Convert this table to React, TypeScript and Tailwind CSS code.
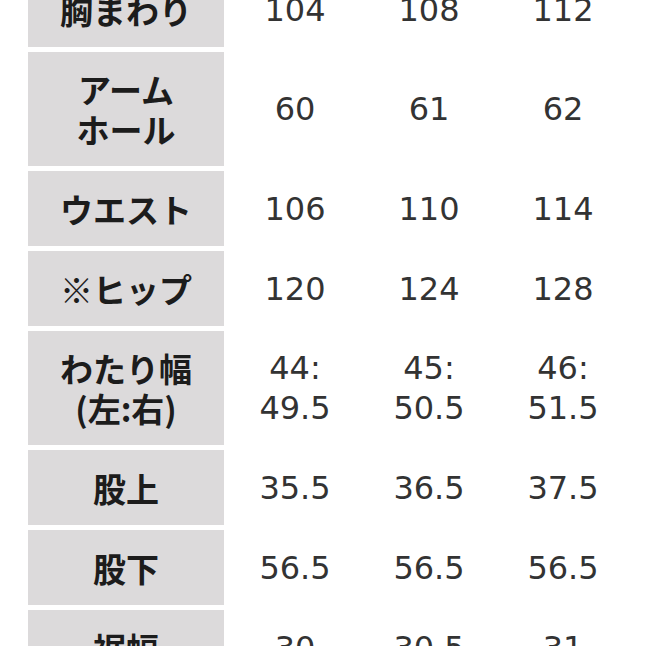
import React from "react";

type Row = { label: React.ReactNode; vals: React.ReactNode[]; tall?: boolean };

const rows: Row[] = [
  { label: "胸まわり", vals: ["104", "108", "112"] },
  { label: <>アーム<br />ホール</>, vals: ["60", "61", "62"], tall: true },
  { label: "ウエスト", vals: ["106", "110", "114"] },
  { label: "※ヒップ", vals: ["120", "124", "128"] },
  {
    label: <>わたり幅<br />(左:右)</>,
    vals: [<>44:<br />49.5</>, <>45:<br />50.5</>, <>46:<br />51.5</>],
    tall: true,
  },
  { label: "股上", vals: ["35.5", "36.5", "37.5"] },
  { label: "股下", vals: ["56.5", "56.5", "56.5"] },
  { label: "裾幅", vals: ["30", "30.5", "31"] },
];

export default function App() {
  return (
    <div className="w-[646px] h-[646px] overflow-hidden bg-white">
      <div className="flex flex-col gap-[5px] -mt-[28px] pl-[28px]">
        {rows.map((r, i) => (
          <div key={i} className={`flex ${r.tall ? "h-[114px]" : "h-[75px]"}`}>
            <div
              className="w-[196px] bg-[#dcdadb] flex items-center justify-center text-center text-[33px] font-bold leading-[40px] text-[#1c1c1c]"
              style={{ fontFamily: '"Noto Sans CJK JP", sans-serif' }}
            >
              <span>{r.label}</span>
            </div>
            <div className="w-[4px]" />
            {r.vals.map((v, j) => (
              <div
                key={j}
                className="w-[134px] flex items-center justify-center text-center text-[32px] leading-[40px] text-[#333333]"
                style={{ fontFamily: '"DejaVu Sans", sans-serif' }}
              >
                <span>{v}</span>
              </div>
            ))}
          </div>
        ))}
      </div>
    </div>
  );
}
